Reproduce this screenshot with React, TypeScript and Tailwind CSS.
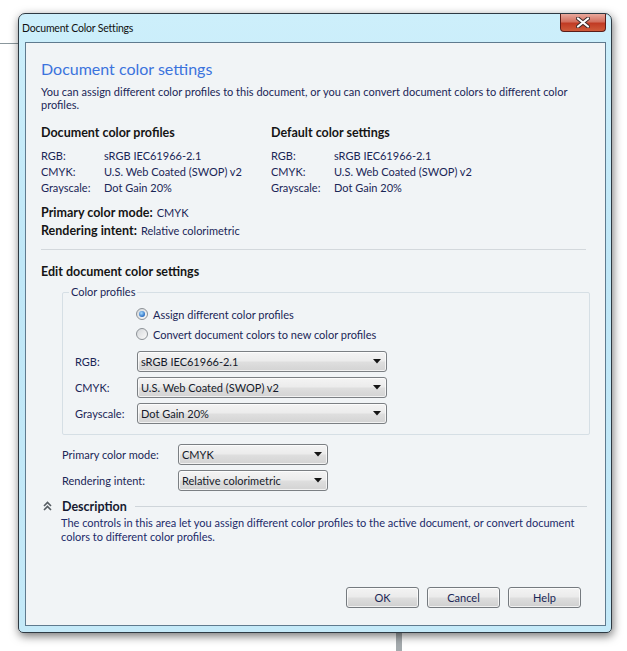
import React from 'react'

const body = "font-['Lato','Noto_Sans',sans-serif] text-[11px] leading-[13px] text-[#1a2656]"

function Arrow() {
  return (
    <svg width="8" height="5" viewBox="0 0 8 5">
      <path d="M0 0h8L4 4.5z" fill="#151515" />
    </svg>
  )
}

function Combo({ value, w }: { value: string; w: string }) {
  return (
    <div
      className={`${w} h-[21px] flex items-center justify-between rounded-[3px] border border-[#7b7f83] bg-[linear-gradient(#f4f4f4,#ececec_45%,#dedede_55%,#d3d3d3)] pl-[3px] pr-[5px] text-[#151a2a] shadow-[inset_0_0_0_1px_rgba(255,255,255,0.7)]`}
    >
      <span>{value}</span>
      <Arrow />
    </div>
  )
}

function Radio({ checked, label }: { checked?: boolean; label: string }) {
  return (
    <div className="h-[20px] flex items-center gap-[5px]">
      <span className="w-[12px] h-[12px] rounded-full border border-[#8c9196] bg-[linear-gradient(135deg,#d4d7da,#fbfbfb)] flex items-center justify-center">
        {checked && (
          <span className="w-[6px] h-[6px] rounded-full bg-[radial-gradient(circle_at_40%_35%,#a8dcff,#2a6fc4_70%,#0c3e86)]" />
        )}
      </span>
      <span>{label}</span>
    </div>
  )
}

function Button({ label }: { label: string }) {
  return (
    <div className="w-[73px] h-[21px] flex items-center justify-center rounded-[3px] border border-[#757a7f] bg-[linear-gradient(#f3f3f3,#ebebeb_45%,#dddddd_55%,#cfcfcf)] shadow-[inset_0_0_0_1px_rgba(255,255,255,0.7)] text-[#1a2656]">
      {label}
    </div>
  )
}

const docProfiles = [
  ['RGB:', 'sRGB IEC61966-2.1'],
  ['CMYK:', 'U.S. Web Coated (SWOP) v2'],
  ['Grayscale:', 'Dot Gain 20%'],
]

function ProfileColumn({ title }: { title: string }) {
  return (
    <div className="w-[230px]">
      <div className="h-[14px] leading-[14px] font-bold text-[12.5px] text-[#151515]">{title}</div>
      <div className="mt-[8px]">
        {docProfiles.map(([k, v]) => (
          <div key={k} className="h-[16px] leading-[16px] flex">
            <span className="w-[63px]">{k}</span>
            <span>{v}</span>
          </div>
        ))}
      </div>
    </div>
  )
}

export default function App() {
  return (
    <div className={`relative h-[651px] overflow-hidden bg-white ${body}`}>
      <div className="absolute left-0 top-[43px] w-[18px] h-px bg-[#8a979c]" />
      <div className="absolute left-[396px] top-[633px] w-[6px] h-[18px] bg-[#a4aaad]" />

      <div className="pt-[13px] pl-[18px]">
        <div className="relative w-[594px] h-[620px] flex flex-col rounded-t-[7px] rounded-b-[5px] border border-[#2e3a43] bg-[linear-gradient(#cdeffb,#c0e7f7_40%,#c4e9f8)] shadow-[1px_3px_10px_rgba(0,0,0,0.55)]">
          <div className="h-[28px] flex items-start justify-between pl-[3px] pr-[5px]">
            <div className="h-[28px] flex items-center text-[10.5px] tracking-[-0.2px] text-[#111]">
              Document Color Settings
            </div>
            <div className="w-[46px] h-[18px] rounded-b-[4px] border border-t-0 border-[#5a1d18] bg-[linear-gradient(#e9a89c,#d3705f_45%,#c13b24_55%,#cf5b3a)] flex items-center justify-center">
              <svg width="14" height="11" viewBox="0 0 14 11">
                <path d="M2 1.5l10 8M12 1.5l-10 8" stroke="#3a2a2a" strokeWidth="4" strokeLinecap="round" />
                <path d="M2 1.5l10 8M12 1.5l-10 8" stroke="#ffffff" strokeWidth="2.2" strokeLinecap="round" />
              </svg>
            </div>
          </div>

          <div className="flex-1 ml-[6px] mr-[5px] mb-[6px] border border-[#5f7a8e] bg-[#f1f4f6] flex flex-col pl-[15px] pr-[18px]">
            <div className="mt-[16px] h-[20px] leading-[20px] text-[16px] text-[#3b73dd]">
              Document color settings
            </div>
            <p className="mt-[6px] w-[545px]">
              You can assign different color profiles to this document, or you can convert document colors to different color profiles.
            </p>

            <div className="mt-[15px] flex">
              <ProfileColumn title="Document color profiles" />
              <ProfileColumn title="Default color settings" />
            </div>

            <div className="mt-[7px]">
              <div className="h-[18px] flex items-center gap-[4px]">
                <span className="font-bold text-[12.5px] text-[#151515]">Primary color mode:</span>
                <span>CMYK</span>
              </div>
              <div className="h-[18px] flex items-center gap-[4px]">
                <span className="font-bold text-[12.5px] text-[#151515]">Rendering intent:</span>
                <span>Relative colorimetric</span>
              </div>
            </div>

            <div className="mt-[10px] w-[545px] h-px bg-[#d3d8dc]" />

            <div className="mt-[15px] h-[14px] leading-[14px] font-bold text-[12.5px] text-[#151515]">
              Edit document color settings
            </div>

            <fieldset className="mt-[6px] ml-[21px] w-[528px] border border-[#d6dfe5] rounded-[2px] pb-[10px]">
              <legend className="ml-[6px] px-[2px] h-[14px] leading-[14px]">Color profiles</legend>
              <div className="pt-[5px] pl-[73px]">
                <Radio checked label="Assign different color profiles" />
                <Radio label="Convert document colors to new color profiles" />
              </div>
              <div className="mt-[7px] pl-[12px] flex flex-col gap-[5px]">
                {docProfiles.map(([k, v]) => (
                  <div key={k} className="flex items-center">
                    <span className="w-[62px]">{k}</span>
                    <Combo value={v} w="w-[250px]" />
                  </div>
                ))}
              </div>
            </fieldset>

            <div className="mt-[9px] pl-[21px] flex flex-col gap-[5px]">
              <div className="flex items-center">
                <span className="w-[116px]">Primary color mode:</span>
                <Combo value="CMYK" w="w-[150px]" />
              </div>
              <div className="flex items-center">
                <span className="w-[116px]">Rendering intent:</span>
                <Combo value="Relative colorimetric" w="w-[150px]" />
              </div>
            </div>

            <div className="mt-[8px] h-[14px] flex items-center">
              <svg className="ml-[2px]" width="9" height="10" viewBox="0 0 9 10">
                <path d="M1 5l3.5-3.5L8 5M1 9l3.5-3.5L8 9" stroke="#555c62" strokeWidth="1.6" fill="none" />
              </svg>
              <span className="ml-[10px] font-bold text-[12.5px] text-[#151a30]">Description</span>
              <div className="ml-[8px] flex-1 h-px bg-[#cfd5da]" />
            </div>
            <p className="mt-[3px] pl-[20px] w-[545px] leading-[14px] text-[#1c2b6a]">
              The controls in this area let you assign different color profiles to the active document, or convert document colors to different color profiles.
            </p>

            <div className="mt-auto mb-[17px] flex justify-end gap-[8px] pr-[6px]">
              <Button label="OK" />
              <Button label="Cancel" />
              <Button label="Help" />
            </div>
          </div>
        </div>
      </div>
    </div>
  )
}
